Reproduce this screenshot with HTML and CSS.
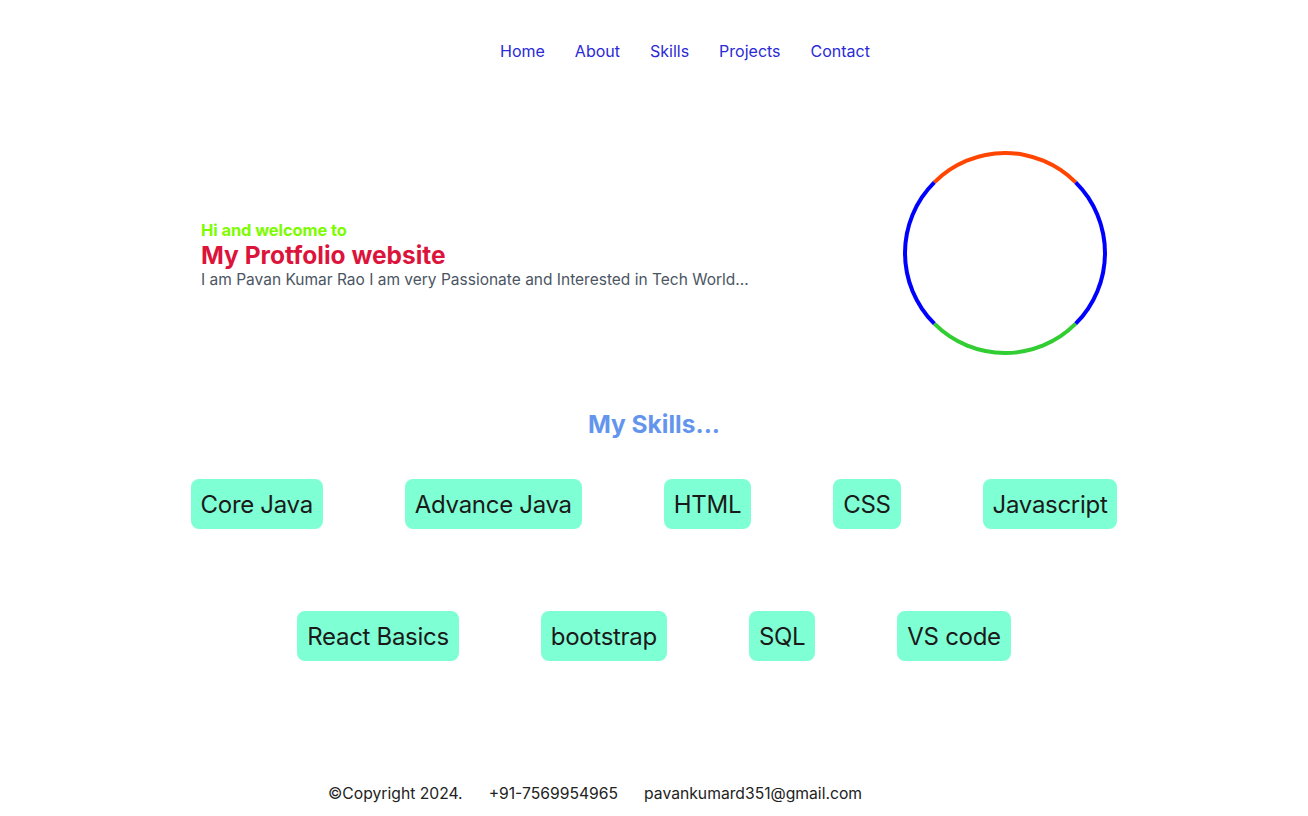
FILE: index.html
```html
<!DOCTYPE html>
<html lang="en">
<head>
<meta charset="utf-8">
<title>Portfolio</title>
<link rel="stylesheet" href="styles.css">
</head>
<body>
<nav class="nav">
  <a href="#">Home</a>
  <a href="#">About</a>
  <a href="#">Skills</a>
  <a href="#">Projects</a>
  <a href="#">Contact</a>
</nav>
<section class="hero">
  <div class="intro">
    <div class="hi">Hi and welcome to</div>
    <h1 class="title">My Protfolio website</h1>
    <p class="desc">I am Pavan Kumar Rao I am very Passionate and Interested in Tech World...</p>
  </div>
  <div class="ring"></div>
</section>
<section class="skills">
  <h2 class="skills-title">My Skills...</h2>
  <div class="chips">
    <span class="chip">Core Java</span>
    <span class="chip">Advance Java</span>
    <span class="chip">HTML</span>
    <span class="chip">CSS</span>
    <span class="chip">Javascript</span>
    <span class="chip">React Basics</span>
    <span class="chip">bootstrap</span>
    <span class="chip">SQL</span>
    <span class="chip">VS code</span>
  </div>
</section>
<footer class="footer">
  <span>©Copyright 2024.</span>
  <span>+91-7569954965</span>
  <span>pavankumard351@gmail.com</span>
</footer>
</body>
</html>
```
FILE: styles.css
```css
* { box-sizing: border-box; }
body {
  margin: 0;
  font-family: Inter, "Noto Sans", sans-serif;
  background: #fff;
  color: #222;
}
.nav {
  display: flex;
  justify-content: center;
  gap: 30px;
  padding-top: 40px;
  padding-left: 62px;
  font-size: 16px;
  line-height: 22px;
}
.nav a {
  color: #2a2ad6;
  text-decoration: none;
}
.hero {
  display: flex;
  align-items: center;
  justify-content: space-between;
  padding: 0 201px;
  margin-top: 89px;
}
.intro { padding-top: 4px; }
.hi {
  color: #7cfc00;
  font-weight: 700;
  font-size: 16.5px;
  line-height: 20px;
  letter-spacing: -0.1px;
}
.title {
  margin: 0;
  color: #dc143c;
  font-weight: 700;
  font-size: 24.5px;
  line-height: 30px;
}
.desc {
  margin: 0;
  color: #4b5563;
  font-size: 15.5px;
  line-height: 20px;
}
.ring {
  width: 204px;
  height: 204px;
  border-radius: 50%;
  border: 4px solid;
  border-color: #ff4500 #0000ff #32cd32 #0000ff;
}
.skills { margin-top: 55px; }
.skills-title {
  margin: 0;
  text-align: center;
  color: #6495ed;
  font-size: 24.5px;
  line-height: 28px;
  font-weight: 700;
}
.chips {
  display: flex;
  flex-wrap: wrap;
  justify-content: center;
  gap: 82px 82px;
  margin: 41px auto 0;
  max-width: 1000px;
}
.chip {
  background: #7fffd4;
  border-radius: 8px;
  padding: 0 10px;
  height: 50px;
  display: flex;
  align-items: center;
  font-size: 24px;
  letter-spacing: -0.3px;
  color: #1a1a1a;
}
.footer {
  display: flex;
  gap: 26px;
  padding-left: 328px;
  margin-top: 122px;
  font-size: 15.7px;
  line-height: 22px;
  color: #222;
}
```
